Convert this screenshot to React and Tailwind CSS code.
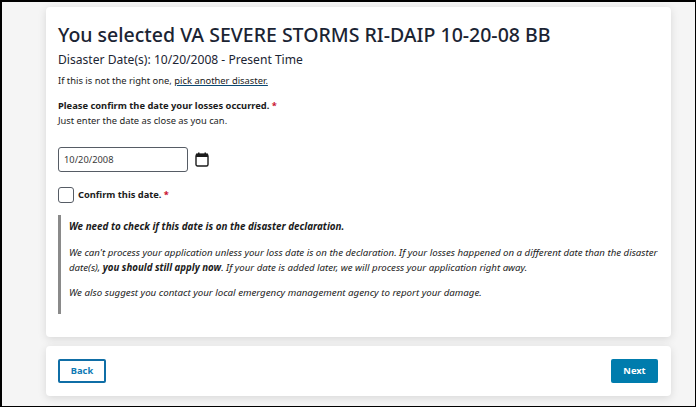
import React from "react";

function CalendarIcon() {
  return (
    <svg width="14" height="15" viewBox="0 0 14 15" className="ml-[7px] shrink-0">
      <rect x="1" y="2.5" width="12" height="11.5" rx="1.5" fill="none" stroke="#1b1b1b" strokeWidth="1.4" />
      <rect x="1" y="1.5" width="12" height="3.5" fill="#1b1b1b" />
      <rect x="3" y="0.5" width="1.5" height="2" fill="#1b1b1b" />
      <rect x="9.5" y="0.5" width="1.5" height="2" fill="#1b1b1b" />
    </svg>
  );
}

const Req = () => <span className="text-[#c8102e]"> *</span>;

export default function App() {
  return (
    <div className="w-[696px] h-[407px] overflow-hidden border-t-2 border-l-2 border-r border-b border-black bg-[#f5f5f5] text-[#1b1b1b] font-['Noto_Sans','Open_Sans',sans-serif]">
      <div className="ml-[44px] mt-[5px] w-[625px] flex flex-col gap-[9px]">
        <section className="h-[330px] rounded-[4px] bg-white shadow-[0_2px_8px_rgba(0,0,0,0.12)] pl-[12px] pr-[8px] pt-[15px]">
          <h1 className="text-[19.5px] leading-[26px] font-medium text-[#1b2433]">You selected VA SEVERE STORMS RI-DAIP 10-20-08 BB</h1>
          <h2 className="mt-[3px] text-[12.1px] leading-[17px] text-[#1b2433]">Disaster Date(s): 10/20/2008 - Present Time</h2>
          <p className="mt-[6px] text-[9.4px] leading-[13px]">
            If this is not the right one, <a className="underline decoration-[#0b4a75]">pick another disaster.</a>
          </p>
          <p className="mt-[12px] text-[9.35px] leading-[13px] font-bold">
            Please confirm the date your losses occurred.<Req />
          </p>
          <p className="mt-[2px] text-[9.35px] leading-[13px]">Just enter the date as close as you can.</p>
          <div className="mt-[20px] flex items-center">
            <div className="w-[130px] h-[25px] rounded-[3px] border border-[#565c65] pl-[5px] flex items-center text-[9.3px] text-[#3a3a3a]">10/20/2008</div>
            <CalendarIcon />
          </div>
          <div className="mt-[15px] flex items-center">
            <div className="w-[16px] h-[16px] rounded-[3px] border border-[#565c65] bg-white" />
            <span className="ml-[4px] text-[9.3px] font-bold">Confirm this date.<Req /></span>
          </div>
          <div className="mt-[12px] h-[99px] border-l-[3px] border-[#8a8a8a] pl-[8px] italic text-[9.72px] leading-[15px]">
            <p className="pt-[4px] font-bold text-[9.85px]">We need to check if this date is on the disaster declaration.</p>
            <p className="mt-[11px] text-[9.67px]">
              We can't process your application unless your loss date is on the declaration. If your losses happened on a different date than the disaster date(s), <b>you should still apply now</b>. If your date is added later, we will process your application right away.
            </p>
            <p className="mt-[10px]">We also suggest you contact your local emergency management agency to report your damage.</p>
          </div>
        </section>
        <section className="h-[50px] rounded-[4px] bg-white shadow-[0_2px_8px_rgba(0,0,0,0.12)] pl-[12px] pr-[13px] flex items-center justify-between">
          <button className="w-[48px] h-[24px] rounded-[2px] border-2 border-[#0f6ea6] bg-white text-[#0f7ab5] text-[9.3px] font-bold flex items-center justify-center">Back</button>
          <button className="w-[47px] h-[24px] rounded-[2px] bg-[#007cad] text-white text-[9.3px] font-bold flex items-center justify-center">Next</button>
        </section>
      </div>
    </div>
  );
}
